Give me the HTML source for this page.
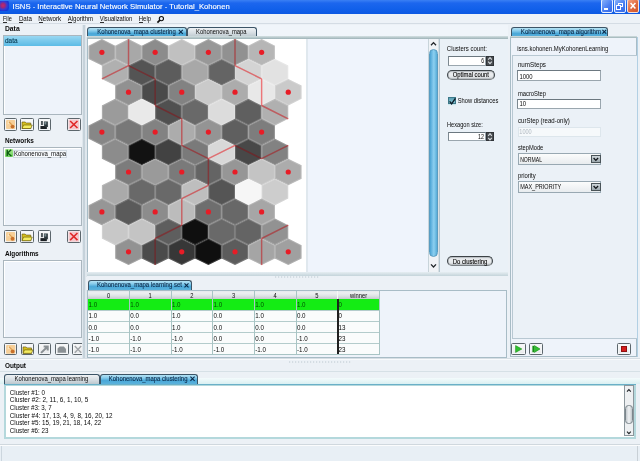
<!DOCTYPE html>
<html><head><meta charset="utf-8"><style>
*{margin:0;padding:0;box-sizing:border-box}
html,body{width:640px;height:461px;overflow:hidden;background:#ecf1f6;font-family:"Liberation Sans", sans-serif;font-size:6px;color:#0a0a0a}
.a{position:absolute}
.list{position:absolute;background:#eef3fa;border:1px solid #aab6be;box-shadow:inset 1px 1px 0 #fff}
.tbtn{position:absolute;border:1px solid #5c666c;border-radius:1.5px;background:linear-gradient(#fafafa,#e6e8ea);box-shadow:inset 0 0 0 1px #f4f6f8}
.tab{position:absolute;border:1px solid #3c5466;border-bottom:none;border-radius:3px 3px 0 0}
.tabsel{background:linear-gradient(#b4e2f4 0%,#8acdec 30%,#4aa8d8 62%,#5cb2dc 100%)}
.tabun{background:linear-gradient(#eef1f4 0%,#d8dfe4 50%,#bcc8ce 100%)}
.field{position:absolute;background:#fff;border:1px solid #9aa6ae;border-top-color:#6c7880;border-left-color:#7c8890}
.pill{position:absolute;border:1px solid #3c4246;border-bottom-color:#7a8084;border-radius:6px;background:linear-gradient(#d8dcdf 0%,#eceef0 40%,#e4e7e9 70%,#c8ccd0 100%);box-shadow:inset 0 0 0 0.8px #b4b9bd}
svg text{font-family:"Liberation Sans", sans-serif}
html{filter:blur(0.3px)}
</style></head><body>
<!-- title bar -->
<div class="a" style="left:0px;top:0px;width:640px;height:13.5px;background:linear-gradient(#3a80f4 0%,#1c66ee 22%,#1160ea 65%,#0c58e2 100%)"></div>
<div class="a" style="left:0px;top:1px;width:9px;height:10px;background:radial-gradient(circle at 3px 4.5px,#c02a70 0,#a02878 2px,#3a3ad0 4px,#1238d8 6px,transparent 8px)"></div>
<div class="a" style="left:601.2px;top:-1px;width:12px;height:13.6px;border:1px solid #e8f0ff;border-radius:2px;background:linear-gradient(135deg,#86b0fa,#4a7ef2 55%,#3468e6)"></div>
<div class="a" style="left:603.6px;top:8.2px;width:4.4px;height:1.6px;background:#fff"></div>
<div class="a" style="left:614.3px;top:-1px;width:11.6px;height:13.6px;border:1px solid #e8f0ff;border-radius:2px;background:linear-gradient(135deg,#86b0fa,#4a7ef2 55%,#3468e6)"></div>
<div class="a" style="left:618.3px;top:2.8px;width:5px;height:4.6px;border:1px solid #fff;border-top-width:1.6px"></div>
<div class="a" style="left:616.3px;top:5px;width:5px;height:4.6px;border:1px solid #fff;border-top-width:1.6px;background:#3a6ef0"></div>
<div class="a" style="left:627px;top:-1px;width:12px;height:13.6px;border:1px solid #f8e0d8;border-radius:2px;background:linear-gradient(135deg,#f4a080,#e06a40 55%,#d05428)"></div>
<svg class="a" style="left:627px;top:0" width="12" height="13"><path d="M3.6 3 L8.4 8.6 M8.4 3 L3.6 8.6" stroke="#fff" stroke-width="1.5"/></svg>
<!-- menu -->
<div class="a" style="left:0px;top:13.5px;width:640px;height:10.5px;background:#edf2f7;border-bottom:1px solid #d4dce4"></div>
<div class="a" style="left:3.0px;top:21.9px;width:3.6px;height:0.7px;background:#303030"></div><div class="a" style="left:19.0px;top:21.9px;width:4.4px;height:0.7px;background:#303030"></div><div class="a" style="left:38.5px;top:21.9px;width:4.8px;height:0.7px;background:#303030"></div><div class="a" style="left:67.8px;top:21.9px;width:4.4px;height:0.7px;background:#303030"></div><div class="a" style="left:99.7px;top:21.9px;width:4.2px;height:0.7px;background:#303030"></div><div class="a" style="left:138.8px;top:21.9px;width:4.5px;height:0.7px;background:#303030"></div>
<svg class="a" style="left:156px;top:14.5px" width="9" height="9"><circle cx="5.4" cy="3.6" r="2.1" stroke="#111" stroke-width="1.1" fill="none"/><path d="M3.9 5.1 L1.4 7.6" stroke="#111" stroke-width="1.7"/></svg>

<!-- left pane -->
<div class="list" style="left:3px;top:35px;width:78.5px;height:79.5px"></div>
<div class="a" style="left:4px;top:35.8px;width:76.5px;height:10.4px;background:linear-gradient(#9ad8f2 0%,#7ccaec 45%,#5cbce6 100%)"></div>
<div class="tbtn" style="left:3.5px;top:118px;width:13.2px;height:13px"></div><svg class="a" style="left:3.5px;top:118px" width="13.2" height="13" viewBox="0 0 13 13" preserveAspectRatio="none"><rect x="2" y="2" width="9" height="9" rx="1" fill="#f6cf98"/><path d="M4 2.5 L6 5.5 L3.5 6.5Z" fill="#fbe6c0"/><circle cx="8.4" cy="8.6" r="1.9" fill="#c8702a"/><path d="M5 4 L8 7" stroke="#e0a050" stroke-width="1.2"/></svg><div class="tbtn" style="left:20.4px;top:118px;width:13.3px;height:13px"></div><svg class="a" style="left:20.4px;top:118px" width="13.3" height="13" viewBox="0 0 13 13" preserveAspectRatio="none"><path d="M2 4 L5 4 L6 5 L10.5 5 L10.5 10.5 L2 10.5Z" fill="#d6c020" stroke="#605000" stroke-width="0.6"/><path d="M3.5 7 L12 7 L10.5 10.5 L2 10.5Z" fill="#f4ec60" stroke="#605000" stroke-width="0.6"/></svg><div class="tbtn" style="left:38px;top:118px;width:12.8px;height:13px"></div><svg class="a" style="left:38px;top:118px" width="12.8" height="13" viewBox="0 0 13 13" preserveAspectRatio="none"><rect x="2.5" y="8" width="6.5" height="3" fill="#1c2024"/><rect x="3" y="3" width="2" height="4" fill="#50585c"/><path d="M6 3.5 L10 3.5 L10 9 L7 9 L6 7Z" fill="#2a3438"/><rect x="6.5" y="4" width="2" height="2.5" fill="#7a8c90"/></svg><div class="tbtn" style="left:67.2px;top:118px;width:13.6px;height:13px"></div><svg class="a" style="left:67.2px;top:118px" width="13.6" height="13" viewBox="0 0 13 13" preserveAspectRatio="none"><rect x="1.5" y="1.5" width="10" height="10" fill="#f4c8cc"/><path d="M3 3 L10 10 M10 3 L3 10" stroke="#e02828" stroke-width="1.5"/></svg>
<div class="list" style="left:3px;top:147.3px;width:78.5px;height:79.2px"></div>
<div class="a" style="left:4.9px;top:149.3px;width:7.8px;height:7.5px;background:linear-gradient(#a8ea90,#6cd05a);border-radius:1px"></div>
<svg class="a" style="left:4.9px;top:149.3px" width="8" height="8"><path d="M2.2 0.8 L2.2 7 M6.2 0.8 L2.6 4 L6.4 7" stroke="#0c5a10" stroke-width="1.4" fill="none"/></svg>
<div class="a" style="left:13.1px;top:149.8px;width:54.2px;height:8px;border:1px solid #d2dae2;background:#f6f9fc"></div>
<div class="tbtn" style="left:3.5px;top:230px;width:13.2px;height:13.2px"></div><svg class="a" style="left:3.5px;top:230px" width="13.2" height="13.2" viewBox="0 0 13 13" preserveAspectRatio="none"><rect x="2" y="2" width="9" height="9" rx="1" fill="#f6cf98"/><path d="M4 2.5 L6 5.5 L3.5 6.5Z" fill="#fbe6c0"/><circle cx="8.4" cy="8.6" r="1.9" fill="#c8702a"/><path d="M5 4 L8 7" stroke="#e0a050" stroke-width="1.2"/></svg><div class="tbtn" style="left:20.4px;top:230px;width:13.3px;height:13.2px"></div><svg class="a" style="left:20.4px;top:230px" width="13.3" height="13.2" viewBox="0 0 13 13" preserveAspectRatio="none"><path d="M2 4 L5 4 L6 5 L10.5 5 L10.5 10.5 L2 10.5Z" fill="#d6c020" stroke="#605000" stroke-width="0.6"/><path d="M3.5 7 L12 7 L10.5 10.5 L2 10.5Z" fill="#f4ec60" stroke="#605000" stroke-width="0.6"/></svg><div class="tbtn" style="left:38px;top:230px;width:12.8px;height:13.2px"></div><svg class="a" style="left:38px;top:230px" width="12.8" height="13.2" viewBox="0 0 13 13" preserveAspectRatio="none"><rect x="2.5" y="8" width="6.5" height="3" fill="#1c2024"/><rect x="3" y="3" width="2" height="4" fill="#50585c"/><path d="M6 3.5 L10 3.5 L10 9 L7 9 L6 7Z" fill="#2a3438"/><rect x="6.5" y="4" width="2" height="2.5" fill="#7a8c90"/></svg><div class="tbtn" style="left:67.2px;top:230px;width:13.6px;height:13.2px"></div><svg class="a" style="left:67.2px;top:230px" width="13.6" height="13.2" viewBox="0 0 13 13" preserveAspectRatio="none"><rect x="1.5" y="1.5" width="10" height="10" fill="#f4c8cc"/><path d="M3 3 L10 10 M10 3 L3 10" stroke="#e02828" stroke-width="1.5"/></svg>
<div class="list" style="left:3px;top:259.8px;width:78.5px;height:78.5px"></div>
<div class="tbtn" style="left:3.5px;top:342.5px;width:13.4px;height:12.8px"></div><svg class="a" style="left:3.5px;top:342.5px" width="13.4" height="12.8" viewBox="0 0 13 13" preserveAspectRatio="none"><rect x="2" y="2" width="9" height="9" rx="1" fill="#f6cf98"/><path d="M4 2.5 L6 5.5 L3.5 6.5Z" fill="#fbe6c0"/><circle cx="8.4" cy="8.6" r="1.9" fill="#c8702a"/><path d="M5 4 L8 7" stroke="#e0a050" stroke-width="1.2"/></svg><div class="tbtn" style="left:20.8px;top:342.5px;width:13px;height:12.8px"></div><svg class="a" style="left:20.8px;top:342.5px" width="13" height="12.8" viewBox="0 0 13 13" preserveAspectRatio="none"><path d="M2 4 L5 4 L6 5 L10.5 5 L10.5 10.5 L2 10.5Z" fill="#d6c020" stroke="#605000" stroke-width="0.6"/><path d="M3.5 7 L12 7 L10.5 10.5 L2 10.5Z" fill="#f4ec60" stroke="#605000" stroke-width="0.6"/></svg><div class="tbtn" style="left:38px;top:342.5px;width:13.3px;height:12.8px"></div><svg class="a" style="left:38px;top:342.5px" width="13.3" height="12.8" viewBox="0 0 13 13" preserveAspectRatio="none"><path d="M3 10 L9 4 M5.5 3.5 L9.5 3.5 L9.5 7.5" stroke="#8a9094" stroke-width="2" fill="none"/></svg><div class="tbtn" style="left:55.3px;top:342.5px;width:13.6px;height:12.8px"></div><svg class="a" style="left:55.3px;top:342.5px" width="13.6" height="12.8" viewBox="0 0 13 13" preserveAspectRatio="none"><path d="M2.5 10 L2.5 5.5 L4.5 3.5 L8.5 3.5 L10.5 6 L10.5 10Z" fill="#8a9094"/></svg><div class="tbtn" style="left:72.4px;top:342.5px;width:12px;height:12.8px"></div><svg class="a" style="left:72.4px;top:342.5px" width="12" height="12.8" viewBox="0 0 13 13" preserveAspectRatio="none"><path d="M3 3 L10 10 M10 3 L3 10" stroke="#a0a4a8" stroke-width="1.5"/></svg>
<div class="a" style="left:81.6px;top:24.5px;width:5px;height:334px;background:#dfe7ed"></div>
<div class="a" style="left:83.4px;top:24.5px;width:1.6px;height:334px;background:#c6d2da"></div>

<!-- central pane -->
<div class="a" style="left:86.6px;top:37px;width:421.6px;height:238.6px;border:1px solid #a8bcc6;background:#eef3fa"></div>
<div class="a" style="left:86px;top:24.6px;width:422px;height:12.4px;background:#f0f5fa"></div>
<div class="tab tabsel" style="left:87.4px;top:27.3px;width:99.7px;height:9.4px"></div>
<div class="tab tabun" style="left:187.1px;top:27.3px;width:70.3px;height:9.4px"></div>
<div class="a" style="left:87px;top:36.2px;width:421px;height:2.6px;background:linear-gradient(#d4e0e2,#9cb2b6)"></div>
<div class="a" style="left:88px;top:38.8px;width:218.3px;height:233.6px;background:#fff"></div>
<svg class="a" style="left:0;top:0" width="640" height="461">
<clipPath id="mc"><rect x="88" y="38.8" width="218.3" height="233.6"/></clipPath>
<g clip-path="url(#mc)">
<path d="M101.90,39.00L115.21,45.65L115.21,58.95L101.90,65.60L88.59,58.95L88.59,45.65Z" fill="#a0a0a0"/>
<path d="M101.90,39.70L114.61,46.00L114.61,58.60L101.90,64.90L89.19,58.60L89.19,46.00Z" fill="none" stroke="#ffffff" stroke-opacity="0.22" stroke-width="0.8"/>
<path d="M128.52,39.00L141.83,45.65L141.83,58.95L128.52,65.60L115.21,58.95L115.21,45.65Z" fill="#a8a8a8"/>
<path d="M128.52,39.70L141.23,46.00L141.23,58.60L128.52,64.90L115.81,58.60L115.81,46.00Z" fill="none" stroke="#ffffff" stroke-opacity="0.22" stroke-width="0.8"/>
<path d="M155.14,39.00L168.45,45.65L168.45,58.95L155.14,65.60L141.83,58.95L141.83,45.65Z" fill="#8c8c8c"/>
<path d="M155.14,39.70L167.85,46.00L167.85,58.60L155.14,64.90L142.43,58.60L142.43,46.00Z" fill="none" stroke="#ffffff" stroke-opacity="0.22" stroke-width="0.8"/>
<path d="M181.76,39.00L195.07,45.65L195.07,58.95L181.76,65.60L168.45,58.95L168.45,45.65Z" fill="#c0c0c0"/>
<path d="M181.76,39.70L194.47,46.00L194.47,58.60L181.76,64.90L169.05,58.60L169.05,46.00Z" fill="none" stroke="#ffffff" stroke-opacity="0.22" stroke-width="0.8"/>
<path d="M208.38,39.00L221.69,45.65L221.69,58.95L208.38,65.60L195.07,58.95L195.07,45.65Z" fill="#989898"/>
<path d="M208.38,39.70L221.09,46.00L221.09,58.60L208.38,64.90L195.67,58.60L195.67,46.00Z" fill="none" stroke="#ffffff" stroke-opacity="0.22" stroke-width="0.8"/>
<path d="M235.00,39.00L248.31,45.65L248.31,58.95L235.00,65.60L221.69,58.95L221.69,45.65Z" fill="#919191"/>
<path d="M235.00,39.70L247.71,46.00L247.71,58.60L235.00,64.90L222.29,58.60L222.29,46.00Z" fill="none" stroke="#ffffff" stroke-opacity="0.22" stroke-width="0.8"/>
<path d="M261.62,39.00L274.93,45.65L274.93,58.95L261.62,65.60L248.31,58.95L248.31,45.65Z" fill="#b6b6b6"/>
<path d="M261.62,39.70L274.33,46.00L274.33,58.60L261.62,64.90L248.91,58.60L248.91,46.00Z" fill="none" stroke="#ffffff" stroke-opacity="0.22" stroke-width="0.8"/>
<path d="M115.21,58.95L128.52,65.60L128.52,78.90L115.21,85.55L101.90,78.90L101.90,65.60Z" fill="#b0b0b0"/>
<path d="M115.21,59.65L127.92,65.95L127.92,78.55L115.21,84.85L102.50,78.55L102.50,65.95Z" fill="none" stroke="#ffffff" stroke-opacity="0.22" stroke-width="0.8"/>
<path d="M141.83,58.95L155.14,65.60L155.14,78.90L141.83,85.55L128.52,78.90L128.52,65.60Z" fill="#545454"/>
<path d="M141.83,59.65L154.54,65.95L154.54,78.55L141.83,84.85L129.12,78.55L129.12,65.95Z" fill="none" stroke="#ffffff" stroke-opacity="0.22" stroke-width="0.8"/>
<path d="M168.45,58.95L181.76,65.60L181.76,78.90L168.45,85.55L155.14,78.90L155.14,65.60Z" fill="#5c5c5c"/>
<path d="M168.45,59.65L181.16,65.95L181.16,78.55L168.45,84.85L155.74,78.55L155.74,65.95Z" fill="none" stroke="#ffffff" stroke-opacity="0.22" stroke-width="0.8"/>
<path d="M195.07,58.95L208.38,65.60L208.38,78.90L195.07,85.55L181.76,78.90L181.76,65.60Z" fill="#a8a8a8"/>
<path d="M195.07,59.65L207.78,65.95L207.78,78.55L195.07,84.85L182.36,78.55L182.36,65.95Z" fill="none" stroke="#ffffff" stroke-opacity="0.22" stroke-width="0.8"/>
<path d="M221.69,58.95L235.00,65.60L235.00,78.90L221.69,85.55L208.38,78.90L208.38,65.60Z" fill="#646464"/>
<path d="M221.69,59.65L234.40,65.95L234.40,78.55L221.69,84.85L208.98,78.55L208.98,65.95Z" fill="none" stroke="#ffffff" stroke-opacity="0.22" stroke-width="0.8"/>
<path d="M248.31,58.95L261.62,65.60L261.62,78.90L248.31,85.55L235.00,78.90L235.00,65.60Z" fill="#d4d4d4"/>
<path d="M248.31,59.65L261.02,65.95L261.02,78.55L248.31,84.85L235.60,78.55L235.60,65.95Z" fill="none" stroke="#ffffff" stroke-opacity="0.22" stroke-width="0.8"/>
<path d="M274.93,58.95L288.24,65.60L288.24,78.90L274.93,85.55L261.62,78.90L261.62,65.60Z" fill="#e2e2e2"/>
<path d="M274.93,59.65L287.64,65.95L287.64,78.55L274.93,84.85L262.22,78.55L262.22,65.95Z" fill="none" stroke="#ffffff" stroke-opacity="0.22" stroke-width="0.8"/>
<path d="M128.52,78.90L141.83,85.55L141.83,98.85L128.52,105.50L115.21,98.85L115.21,85.55Z" fill="#919191"/>
<path d="M128.52,79.60L141.23,85.90L141.23,98.50L128.52,104.80L115.81,98.50L115.81,85.90Z" fill="none" stroke="#ffffff" stroke-opacity="0.22" stroke-width="0.8"/>
<path d="M155.14,78.90L168.45,85.55L168.45,98.85L155.14,105.50L141.83,98.85L141.83,85.55Z" fill="#4a4a4a"/>
<path d="M155.14,79.60L167.85,85.90L167.85,98.50L155.14,104.80L142.43,98.50L142.43,85.90Z" fill="none" stroke="#ffffff" stroke-opacity="0.22" stroke-width="0.8"/>
<path d="M181.76,78.90L195.07,85.55L195.07,98.85L181.76,105.50L168.45,98.85L168.45,85.55Z" fill="#828282"/>
<path d="M181.76,79.60L194.47,85.90L194.47,98.50L181.76,104.80L169.05,98.50L169.05,85.90Z" fill="none" stroke="#ffffff" stroke-opacity="0.22" stroke-width="0.8"/>
<path d="M208.38,78.90L221.69,85.55L221.69,98.85L208.38,105.50L195.07,98.85L195.07,85.55Z" fill="#cacaca"/>
<path d="M208.38,79.60L221.09,85.90L221.09,98.50L208.38,104.80L195.67,98.50L195.67,85.90Z" fill="none" stroke="#ffffff" stroke-opacity="0.22" stroke-width="0.8"/>
<path d="M235.00,78.90L248.31,85.55L248.31,98.85L235.00,105.50L221.69,98.85L221.69,85.55Z" fill="#acacac"/>
<path d="M235.00,79.60L247.71,85.90L247.71,98.50L235.00,104.80L222.29,98.50L222.29,85.90Z" fill="none" stroke="#ffffff" stroke-opacity="0.22" stroke-width="0.8"/>
<path d="M261.62,78.90L274.93,85.55L274.93,98.85L261.62,105.50L248.31,98.85L248.31,85.55Z" fill="#e8e8e8"/>
<path d="M261.62,79.60L274.33,85.90L274.33,98.50L261.62,104.80L248.91,98.50L248.91,85.90Z" fill="none" stroke="#ffffff" stroke-opacity="0.22" stroke-width="0.8"/>
<path d="M288.24,78.90L301.55,85.55L301.55,98.85L288.24,105.50L274.93,98.85L274.93,85.55Z" fill="#cacaca"/>
<path d="M288.24,79.60L300.95,85.90L300.95,98.50L288.24,104.80L275.53,98.50L275.53,85.90Z" fill="none" stroke="#ffffff" stroke-opacity="0.22" stroke-width="0.8"/>
<path d="M115.21,98.85L128.52,105.50L128.52,118.80L115.21,125.45L101.90,118.80L101.90,105.50Z" fill="#9b9b9b"/>
<path d="M115.21,99.55L127.92,105.85L127.92,118.45L115.21,124.75L102.50,118.45L102.50,105.85Z" fill="none" stroke="#ffffff" stroke-opacity="0.22" stroke-width="0.8"/>
<path d="M141.83,98.85L155.14,105.50L155.14,118.80L141.83,125.45L128.52,118.80L128.52,105.50Z" fill="#e9e9e9"/>
<path d="M141.83,99.55L154.54,105.85L154.54,118.45L141.83,124.75L129.12,118.45L129.12,105.85Z" fill="none" stroke="#ffffff" stroke-opacity="0.22" stroke-width="0.8"/>
<path d="M168.45,98.85L181.76,105.50L181.76,118.80L168.45,125.45L155.14,118.80L155.14,105.50Z" fill="#505050"/>
<path d="M168.45,99.55L181.16,105.85L181.16,118.45L168.45,124.75L155.74,118.45L155.74,105.85Z" fill="none" stroke="#ffffff" stroke-opacity="0.22" stroke-width="0.8"/>
<path d="M195.07,98.85L208.38,105.50L208.38,118.80L195.07,125.45L181.76,118.80L181.76,105.50Z" fill="#696969"/>
<path d="M195.07,99.55L207.78,105.85L207.78,118.45L195.07,124.75L182.36,118.45L182.36,105.85Z" fill="none" stroke="#ffffff" stroke-opacity="0.22" stroke-width="0.8"/>
<path d="M221.69,98.85L235.00,105.50L235.00,118.80L221.69,125.45L208.38,118.80L208.38,105.50Z" fill="#dcdcdc"/>
<path d="M221.69,99.55L234.40,105.85L234.40,118.45L221.69,124.75L208.98,118.45L208.98,105.85Z" fill="none" stroke="#ffffff" stroke-opacity="0.22" stroke-width="0.8"/>
<path d="M248.31,98.85L261.62,105.50L261.62,118.80L248.31,125.45L235.00,118.80L235.00,105.50Z" fill="#5f5f5f"/>
<path d="M248.31,99.55L261.02,105.85L261.02,118.45L248.31,124.75L235.60,118.45L235.60,105.85Z" fill="none" stroke="#ffffff" stroke-opacity="0.22" stroke-width="0.8"/>
<path d="M274.93,98.85L288.24,105.50L288.24,118.80L274.93,125.45L261.62,118.80L261.62,105.50Z" fill="#b0b0b0"/>
<path d="M274.93,99.55L287.64,105.85L287.64,118.45L274.93,124.75L262.22,118.45L262.22,105.85Z" fill="none" stroke="#ffffff" stroke-opacity="0.22" stroke-width="0.8"/>
<path d="M101.90,118.80L115.21,125.45L115.21,138.75L101.90,145.40L88.59,138.75L88.59,125.45Z" fill="#878787"/>
<path d="M101.90,119.50L114.61,125.80L114.61,138.40L101.90,144.70L89.19,138.40L89.19,125.80Z" fill="none" stroke="#ffffff" stroke-opacity="0.22" stroke-width="0.8"/>
<path d="M128.52,118.80L141.83,125.45L141.83,138.75L128.52,145.40L115.21,138.75L115.21,125.45Z" fill="#787878"/>
<path d="M128.52,119.50L141.23,125.80L141.23,138.40L128.52,144.70L115.81,138.40L115.81,125.80Z" fill="none" stroke="#ffffff" stroke-opacity="0.22" stroke-width="0.8"/>
<path d="M155.14,118.80L168.45,125.45L168.45,138.75L155.14,145.40L141.83,138.75L141.83,125.45Z" fill="#828282"/>
<path d="M155.14,119.50L167.85,125.80L167.85,138.40L155.14,144.70L142.43,138.40L142.43,125.80Z" fill="none" stroke="#ffffff" stroke-opacity="0.22" stroke-width="0.8"/>
<path d="M181.76,118.80L195.07,125.45L195.07,138.75L181.76,145.40L168.45,138.75L168.45,125.45Z" fill="#acacac"/>
<path d="M181.76,119.50L194.47,125.80L194.47,138.40L181.76,144.70L169.05,138.40L169.05,125.80Z" fill="none" stroke="#ffffff" stroke-opacity="0.22" stroke-width="0.8"/>
<path d="M208.38,118.80L221.69,125.45L221.69,138.75L208.38,145.40L195.07,138.75L195.07,125.45Z" fill="#949494"/>
<path d="M208.38,119.50L221.09,125.80L221.09,138.40L208.38,144.70L195.67,138.40L195.67,125.80Z" fill="none" stroke="#ffffff" stroke-opacity="0.22" stroke-width="0.8"/>
<path d="M235.00,118.80L248.31,125.45L248.31,138.75L235.00,145.40L221.69,138.75L221.69,125.45Z" fill="#5f5f5f"/>
<path d="M235.00,119.50L247.71,125.80L247.71,138.40L235.00,144.70L222.29,138.40L222.29,125.80Z" fill="none" stroke="#ffffff" stroke-opacity="0.22" stroke-width="0.8"/>
<path d="M261.62,118.80L274.93,125.45L274.93,138.75L261.62,145.40L248.31,138.75L248.31,125.45Z" fill="#7d7d7d"/>
<path d="M261.62,119.50L274.33,125.80L274.33,138.40L261.62,144.70L248.91,138.40L248.91,125.80Z" fill="none" stroke="#ffffff" stroke-opacity="0.22" stroke-width="0.8"/>
<path d="M115.21,138.75L128.52,145.40L128.52,158.70L115.21,165.35L101.90,158.70L101.90,145.40Z" fill="#8c8c8c"/>
<path d="M115.21,139.45L127.92,145.75L127.92,158.35L115.21,164.65L102.50,158.35L102.50,145.75Z" fill="none" stroke="#ffffff" stroke-opacity="0.22" stroke-width="0.8"/>
<path d="M141.83,138.75L155.14,145.40L155.14,158.70L141.83,165.35L128.52,158.70L128.52,145.40Z" fill="#121212"/>
<path d="M141.83,139.45L154.54,145.75L154.54,158.35L141.83,164.65L129.12,158.35L129.12,145.75Z" fill="none" stroke="#ffffff" stroke-opacity="0.22" stroke-width="0.8"/>
<path d="M168.45,138.75L181.76,145.40L181.76,158.70L168.45,165.35L155.14,158.70L155.14,145.40Z" fill="#424242"/>
<path d="M168.45,139.45L181.16,145.75L181.16,158.35L168.45,164.65L155.74,158.35L155.74,145.75Z" fill="none" stroke="#ffffff" stroke-opacity="0.22" stroke-width="0.8"/>
<path d="M195.07,138.75L208.38,145.40L208.38,158.70L195.07,165.35L181.76,158.70L181.76,145.40Z" fill="#7a7a7a"/>
<path d="M195.07,139.45L207.78,145.75L207.78,158.35L195.07,164.65L182.36,158.35L182.36,145.75Z" fill="none" stroke="#ffffff" stroke-opacity="0.22" stroke-width="0.8"/>
<path d="M221.69,138.75L235.00,145.40L235.00,158.70L221.69,165.35L208.38,158.70L208.38,145.40Z" fill="#d8d8d8"/>
<path d="M221.69,139.45L234.40,145.75L234.40,158.35L221.69,164.65L208.98,158.35L208.98,145.75Z" fill="none" stroke="#ffffff" stroke-opacity="0.22" stroke-width="0.8"/>
<path d="M248.31,138.75L261.62,145.40L261.62,158.70L248.31,165.35L235.00,158.70L235.00,145.40Z" fill="#484848"/>
<path d="M248.31,139.45L261.02,145.75L261.02,158.35L248.31,164.65L235.60,158.35L235.60,145.75Z" fill="none" stroke="#ffffff" stroke-opacity="0.22" stroke-width="0.8"/>
<path d="M274.93,138.75L288.24,145.40L288.24,158.70L274.93,165.35L261.62,158.70L261.62,145.40Z" fill="#828282"/>
<path d="M274.93,139.45L287.64,145.75L287.64,158.35L274.93,164.65L262.22,158.35L262.22,145.75Z" fill="none" stroke="#ffffff" stroke-opacity="0.22" stroke-width="0.8"/>
<path d="M128.52,158.70L141.83,165.35L141.83,178.65L128.52,185.30L115.21,178.65L115.21,165.35Z" fill="#7c7c7c"/>
<path d="M128.52,159.40L141.23,165.70L141.23,178.30L128.52,184.60L115.81,178.30L115.81,165.70Z" fill="none" stroke="#ffffff" stroke-opacity="0.22" stroke-width="0.8"/>
<path d="M155.14,158.70L168.45,165.35L168.45,178.65L155.14,185.30L141.83,178.65L141.83,165.35Z" fill="#9a9a9a"/>
<path d="M155.14,159.40L167.85,165.70L167.85,178.30L155.14,184.60L142.43,178.30L142.43,165.70Z" fill="none" stroke="#ffffff" stroke-opacity="0.22" stroke-width="0.8"/>
<path d="M181.76,158.70L195.07,165.35L195.07,178.65L181.76,185.30L168.45,178.65L168.45,165.35Z" fill="#7a7a7a"/>
<path d="M181.76,159.40L194.47,165.70L194.47,178.30L181.76,184.60L169.05,178.30L169.05,165.70Z" fill="none" stroke="#ffffff" stroke-opacity="0.22" stroke-width="0.8"/>
<path d="M208.38,158.70L221.69,165.35L221.69,178.65L208.38,185.30L195.07,178.65L195.07,165.35Z" fill="#646464"/>
<path d="M208.38,159.40L221.09,165.70L221.09,178.30L208.38,184.60L195.67,178.30L195.67,165.70Z" fill="none" stroke="#ffffff" stroke-opacity="0.22" stroke-width="0.8"/>
<path d="M235.00,158.70L248.31,165.35L248.31,178.65L235.00,185.30L221.69,178.65L221.69,165.35Z" fill="#969696"/>
<path d="M235.00,159.40L247.71,165.70L247.71,178.30L235.00,184.60L222.29,178.30L222.29,165.70Z" fill="none" stroke="#ffffff" stroke-opacity="0.22" stroke-width="0.8"/>
<path d="M261.62,158.70L274.93,165.35L274.93,178.65L261.62,185.30L248.31,178.65L248.31,165.35Z" fill="#c4c4c4"/>
<path d="M261.62,159.40L274.33,165.70L274.33,178.30L261.62,184.60L248.91,178.30L248.91,165.70Z" fill="none" stroke="#ffffff" stroke-opacity="0.22" stroke-width="0.8"/>
<path d="M288.24,158.70L301.55,165.35L301.55,178.65L288.24,185.30L274.93,178.65L274.93,165.35Z" fill="#acacac"/>
<path d="M288.24,159.40L300.95,165.70L300.95,178.30L288.24,184.60L275.53,178.30L275.53,165.70Z" fill="none" stroke="#ffffff" stroke-opacity="0.22" stroke-width="0.8"/>
<path d="M115.21,178.65L128.52,185.30L128.52,198.60L115.21,205.25L101.90,198.60L101.90,185.30Z" fill="#aaaaaa"/>
<path d="M115.21,179.35L127.92,185.65L127.92,198.25L115.21,204.55L102.50,198.25L102.50,185.65Z" fill="none" stroke="#ffffff" stroke-opacity="0.22" stroke-width="0.8"/>
<path d="M141.83,178.65L155.14,185.30L155.14,198.60L141.83,205.25L128.52,198.60L128.52,185.30Z" fill="#696969"/>
<path d="M141.83,179.35L154.54,185.65L154.54,198.25L141.83,204.55L129.12,198.25L129.12,185.65Z" fill="none" stroke="#ffffff" stroke-opacity="0.22" stroke-width="0.8"/>
<path d="M168.45,178.65L181.76,185.30L181.76,198.60L168.45,205.25L155.14,198.60L155.14,185.30Z" fill="#696969"/>
<path d="M168.45,179.35L181.16,185.65L181.16,198.25L168.45,204.55L155.74,198.25L155.74,185.65Z" fill="none" stroke="#ffffff" stroke-opacity="0.22" stroke-width="0.8"/>
<path d="M195.07,178.65L208.38,185.30L208.38,198.60L195.07,205.25L181.76,198.60L181.76,185.30Z" fill="#bebebe"/>
<path d="M195.07,179.35L207.78,185.65L207.78,198.25L195.07,204.55L182.36,198.25L182.36,185.65Z" fill="none" stroke="#ffffff" stroke-opacity="0.22" stroke-width="0.8"/>
<path d="M221.69,178.65L235.00,185.30L235.00,198.60L221.69,205.25L208.38,198.60L208.38,185.30Z" fill="#555555"/>
<path d="M221.69,179.35L234.40,185.65L234.40,198.25L221.69,204.55L208.98,198.25L208.98,185.65Z" fill="none" stroke="#ffffff" stroke-opacity="0.22" stroke-width="0.8"/>
<path d="M248.31,178.65L261.62,185.30L261.62,198.60L248.31,205.25L235.00,198.60L235.00,185.30Z" fill="#f6f6f6"/>
<path d="M248.31,179.35L261.02,185.65L261.02,198.25L248.31,204.55L235.60,198.25L235.60,185.65Z" fill="none" stroke="#ffffff" stroke-opacity="0.22" stroke-width="0.8"/>
<path d="M274.93,178.65L288.24,185.30L288.24,198.60L274.93,205.25L261.62,198.60L261.62,185.30Z" fill="#cdcdcd"/>
<path d="M274.93,179.35L287.64,185.65L287.64,198.25L274.93,204.55L262.22,198.25L262.22,185.65Z" fill="none" stroke="#ffffff" stroke-opacity="0.22" stroke-width="0.8"/>
<path d="M101.90,198.60L115.21,205.25L115.21,218.55L101.90,225.20L88.59,218.55L88.59,205.25Z" fill="#969696"/>
<path d="M101.90,199.30L114.61,205.60L114.61,218.20L101.90,224.50L89.19,218.20L89.19,205.60Z" fill="none" stroke="#ffffff" stroke-opacity="0.22" stroke-width="0.8"/>
<path d="M128.52,198.60L141.83,205.25L141.83,218.55L128.52,225.20L115.21,218.55L115.21,205.25Z" fill="#5a5a5a"/>
<path d="M128.52,199.30L141.23,205.60L141.23,218.20L128.52,224.50L115.81,218.20L115.81,205.60Z" fill="none" stroke="#ffffff" stroke-opacity="0.22" stroke-width="0.8"/>
<path d="M155.14,198.60L168.45,205.25L168.45,218.55L155.14,225.20L141.83,218.55L141.83,205.25Z" fill="#8c8c8c"/>
<path d="M155.14,199.30L167.85,205.60L167.85,218.20L155.14,224.50L142.43,218.20L142.43,205.60Z" fill="none" stroke="#ffffff" stroke-opacity="0.22" stroke-width="0.8"/>
<path d="M181.76,198.60L195.07,205.25L195.07,218.55L181.76,225.20L168.45,218.55L168.45,205.25Z" fill="#bcbcbc"/>
<path d="M181.76,199.30L194.47,205.60L194.47,218.20L181.76,224.50L169.05,218.20L169.05,205.60Z" fill="none" stroke="#ffffff" stroke-opacity="0.22" stroke-width="0.8"/>
<path d="M208.38,198.60L221.69,205.25L221.69,218.55L208.38,225.20L195.07,218.55L195.07,205.25Z" fill="#6e6e6e"/>
<path d="M208.38,199.30L221.09,205.60L221.09,218.20L208.38,224.50L195.67,218.20L195.67,205.60Z" fill="none" stroke="#ffffff" stroke-opacity="0.22" stroke-width="0.8"/>
<path d="M235.00,198.60L248.31,205.25L248.31,218.55L235.00,225.20L221.69,218.55L221.69,205.25Z" fill="#686868"/>
<path d="M235.00,199.30L247.71,205.60L247.71,218.20L235.00,224.50L222.29,218.20L222.29,205.60Z" fill="none" stroke="#ffffff" stroke-opacity="0.22" stroke-width="0.8"/>
<path d="M261.62,198.60L274.93,205.25L274.93,218.55L261.62,225.20L248.31,218.55L248.31,205.25Z" fill="#a6a6a6"/>
<path d="M261.62,199.30L274.33,205.60L274.33,218.20L261.62,224.50L248.91,218.20L248.91,205.60Z" fill="none" stroke="#ffffff" stroke-opacity="0.22" stroke-width="0.8"/>
<path d="M115.21,218.55L128.52,225.20L128.52,238.50L115.21,245.15L101.90,238.50L101.90,225.20Z" fill="#c8c8c8"/>
<path d="M115.21,219.25L127.92,225.55L127.92,238.15L115.21,244.45L102.50,238.15L102.50,225.55Z" fill="none" stroke="#ffffff" stroke-opacity="0.22" stroke-width="0.8"/>
<path d="M141.83,218.55L155.14,225.20L155.14,238.50L141.83,245.15L128.52,238.50L128.52,225.20Z" fill="#c4c4c4"/>
<path d="M141.83,219.25L154.54,225.55L154.54,238.15L141.83,244.45L129.12,238.15L129.12,225.55Z" fill="none" stroke="#ffffff" stroke-opacity="0.22" stroke-width="0.8"/>
<path d="M168.45,218.55L181.76,225.20L181.76,238.50L168.45,245.15L155.14,238.50L155.14,225.20Z" fill="#5e5e5e"/>
<path d="M168.45,219.25L181.16,225.55L181.16,238.15L168.45,244.45L155.74,238.15L155.74,225.55Z" fill="none" stroke="#ffffff" stroke-opacity="0.22" stroke-width="0.8"/>
<path d="M195.07,218.55L208.38,225.20L208.38,238.50L195.07,245.15L181.76,238.50L181.76,225.20Z" fill="#0f0f0f"/>
<path d="M195.07,219.25L207.78,225.55L207.78,238.15L195.07,244.45L182.36,238.15L182.36,225.55Z" fill="none" stroke="#ffffff" stroke-opacity="0.22" stroke-width="0.8"/>
<path d="M221.69,218.55L235.00,225.20L235.00,238.50L221.69,245.15L208.38,238.50L208.38,225.20Z" fill="#696969"/>
<path d="M221.69,219.25L234.40,225.55L234.40,238.15L221.69,244.45L208.98,238.15L208.98,225.55Z" fill="none" stroke="#ffffff" stroke-opacity="0.22" stroke-width="0.8"/>
<path d="M248.31,218.55L261.62,225.20L261.62,238.50L248.31,245.15L235.00,238.50L235.00,225.20Z" fill="#646464"/>
<path d="M248.31,219.25L261.02,225.55L261.02,238.15L248.31,244.45L235.60,238.15L235.60,225.55Z" fill="none" stroke="#ffffff" stroke-opacity="0.22" stroke-width="0.8"/>
<path d="M274.93,218.55L288.24,225.20L288.24,238.50L274.93,245.15L261.62,238.50L261.62,225.20Z" fill="#929292"/>
<path d="M274.93,219.25L287.64,225.55L287.64,238.15L274.93,244.45L262.22,238.15L262.22,225.55Z" fill="none" stroke="#ffffff" stroke-opacity="0.22" stroke-width="0.8"/>
<path d="M128.52,238.50L141.83,245.15L141.83,258.45L128.52,265.10L115.21,258.45L115.21,245.15Z" fill="#929292"/>
<path d="M128.52,239.20L141.23,245.50L141.23,258.10L128.52,264.40L115.81,258.10L115.81,245.50Z" fill="none" stroke="#ffffff" stroke-opacity="0.22" stroke-width="0.8"/>
<path d="M155.14,238.50L168.45,245.15L168.45,258.45L155.14,265.10L141.83,258.45L141.83,245.15Z" fill="#4b4b4b"/>
<path d="M155.14,239.20L167.85,245.50L167.85,258.10L155.14,264.40L142.43,258.10L142.43,245.50Z" fill="none" stroke="#ffffff" stroke-opacity="0.22" stroke-width="0.8"/>
<path d="M181.76,238.50L195.07,245.15L195.07,258.45L181.76,265.10L168.45,258.45L168.45,245.15Z" fill="#373737"/>
<path d="M181.76,239.20L194.47,245.50L194.47,258.10L181.76,264.40L169.05,258.10L169.05,245.50Z" fill="none" stroke="#ffffff" stroke-opacity="0.22" stroke-width="0.8"/>
<path d="M208.38,238.50L221.69,245.15L221.69,258.45L208.38,265.10L195.07,258.45L195.07,245.15Z" fill="#0f0f0f"/>
<path d="M208.38,239.20L221.09,245.50L221.09,258.10L208.38,264.40L195.67,258.10L195.67,245.50Z" fill="none" stroke="#ffffff" stroke-opacity="0.22" stroke-width="0.8"/>
<path d="M235.00,238.50L248.31,245.15L248.31,258.45L235.00,265.10L221.69,258.45L221.69,245.15Z" fill="#5c5c5c"/>
<path d="M235.00,239.20L247.71,245.50L247.71,258.10L235.00,264.40L222.29,258.10L222.29,245.50Z" fill="none" stroke="#ffffff" stroke-opacity="0.22" stroke-width="0.8"/>
<path d="M261.62,238.50L274.93,245.15L274.93,258.45L261.62,265.10L248.31,258.45L248.31,245.15Z" fill="#a5a5a5"/>
<path d="M261.62,239.20L274.33,245.50L274.33,258.10L261.62,264.40L248.91,258.10L248.91,245.50Z" fill="none" stroke="#ffffff" stroke-opacity="0.22" stroke-width="0.8"/>
<path d="M288.24,238.50L301.55,245.15L301.55,258.45L288.24,265.10L274.93,258.45L274.93,245.15Z" fill="#a0a0a0"/>
<path d="M288.24,239.20L300.95,245.50L300.95,258.10L288.24,264.40L275.53,258.10L275.53,245.50Z" fill="none" stroke="#ffffff" stroke-opacity="0.22" stroke-width="0.8"/>
<line x1="128.52" y1="39.00" x2="128.52" y2="65.60" stroke="#ff1010" stroke-width="1.4" stroke-opacity="0.45" style="mix-blend-mode:multiply"/>
<line x1="128.52" y1="39.00" x2="128.52" y2="65.60" stroke="#ff3040" stroke-width="1.4" stroke-opacity="0.18"/>
<line x1="128.52" y1="65.60" x2="101.90" y2="78.90" stroke="#ff1010" stroke-width="1.4" stroke-opacity="0.45" style="mix-blend-mode:multiply"/>
<line x1="128.52" y1="65.60" x2="101.90" y2="78.90" stroke="#ff3040" stroke-width="1.4" stroke-opacity="0.18"/>
<line x1="155.14" y1="78.90" x2="128.52" y2="65.60" stroke="#ff1010" stroke-width="1.4" stroke-opacity="0.45" style="mix-blend-mode:multiply"/>
<line x1="155.14" y1="78.90" x2="128.52" y2="65.60" stroke="#ff3040" stroke-width="1.4" stroke-opacity="0.18"/>
<line x1="235.00" y1="39.00" x2="235.00" y2="65.60" stroke="#ff1010" stroke-width="1.4" stroke-opacity="0.45" style="mix-blend-mode:multiply"/>
<line x1="235.00" y1="39.00" x2="235.00" y2="65.60" stroke="#ff3040" stroke-width="1.4" stroke-opacity="0.18"/>
<line x1="261.62" y1="78.90" x2="235.00" y2="65.60" stroke="#ff1010" stroke-width="1.4" stroke-opacity="0.45" style="mix-blend-mode:multiply"/>
<line x1="261.62" y1="78.90" x2="235.00" y2="65.60" stroke="#ff3040" stroke-width="1.4" stroke-opacity="0.18"/>
<line x1="155.14" y1="78.90" x2="155.14" y2="105.50" stroke="#ff1010" stroke-width="1.4" stroke-opacity="0.45" style="mix-blend-mode:multiply"/>
<line x1="155.14" y1="78.90" x2="155.14" y2="105.50" stroke="#ff3040" stroke-width="1.4" stroke-opacity="0.18"/>
<line x1="181.76" y1="118.80" x2="155.14" y2="105.50" stroke="#ff1010" stroke-width="1.4" stroke-opacity="0.45" style="mix-blend-mode:multiply"/>
<line x1="181.76" y1="118.80" x2="155.14" y2="105.50" stroke="#ff3040" stroke-width="1.4" stroke-opacity="0.18"/>
<line x1="261.62" y1="78.90" x2="261.62" y2="105.50" stroke="#ff1010" stroke-width="1.4" stroke-opacity="0.45" style="mix-blend-mode:multiply"/>
<line x1="261.62" y1="78.90" x2="261.62" y2="105.50" stroke="#ff3040" stroke-width="1.4" stroke-opacity="0.18"/>
<line x1="288.24" y1="118.80" x2="261.62" y2="105.50" stroke="#ff1010" stroke-width="1.4" stroke-opacity="0.45" style="mix-blend-mode:multiply"/>
<line x1="288.24" y1="118.80" x2="261.62" y2="105.50" stroke="#ff3040" stroke-width="1.4" stroke-opacity="0.18"/>
<line x1="181.76" y1="118.80" x2="181.76" y2="145.40" stroke="#ff1010" stroke-width="1.4" stroke-opacity="0.45" style="mix-blend-mode:multiply"/>
<line x1="181.76" y1="118.80" x2="181.76" y2="145.40" stroke="#ff3040" stroke-width="1.4" stroke-opacity="0.18"/>
<line x1="235.00" y1="145.40" x2="208.38" y2="158.70" stroke="#ff1010" stroke-width="1.4" stroke-opacity="0.45" style="mix-blend-mode:multiply"/>
<line x1="235.00" y1="145.40" x2="208.38" y2="158.70" stroke="#ff3040" stroke-width="1.4" stroke-opacity="0.18"/>
<line x1="208.38" y1="158.70" x2="181.76" y2="145.40" stroke="#ff1010" stroke-width="1.4" stroke-opacity="0.45" style="mix-blend-mode:multiply"/>
<line x1="208.38" y1="158.70" x2="181.76" y2="145.40" stroke="#ff3040" stroke-width="1.4" stroke-opacity="0.18"/>
<line x1="288.24" y1="145.40" x2="261.62" y2="158.70" stroke="#ff1010" stroke-width="1.4" stroke-opacity="0.45" style="mix-blend-mode:multiply"/>
<line x1="288.24" y1="145.40" x2="261.62" y2="158.70" stroke="#ff3040" stroke-width="1.4" stroke-opacity="0.18"/>
<line x1="261.62" y1="158.70" x2="235.00" y2="145.40" stroke="#ff1010" stroke-width="1.4" stroke-opacity="0.45" style="mix-blend-mode:multiply"/>
<line x1="261.62" y1="158.70" x2="235.00" y2="145.40" stroke="#ff3040" stroke-width="1.4" stroke-opacity="0.18"/>
<line x1="208.38" y1="158.70" x2="208.38" y2="185.30" stroke="#ff1010" stroke-width="1.4" stroke-opacity="0.45" style="mix-blend-mode:multiply"/>
<line x1="208.38" y1="158.70" x2="208.38" y2="185.30" stroke="#ff3040" stroke-width="1.4" stroke-opacity="0.18"/>
<line x1="208.38" y1="185.30" x2="181.76" y2="198.60" stroke="#ff1010" stroke-width="1.4" stroke-opacity="0.45" style="mix-blend-mode:multiply"/>
<line x1="208.38" y1="185.30" x2="181.76" y2="198.60" stroke="#ff3040" stroke-width="1.4" stroke-opacity="0.18"/>
<line x1="181.76" y1="198.60" x2="181.76" y2="225.20" stroke="#ff1010" stroke-width="1.4" stroke-opacity="0.45" style="mix-blend-mode:multiply"/>
<line x1="181.76" y1="198.60" x2="181.76" y2="225.20" stroke="#ff3040" stroke-width="1.4" stroke-opacity="0.18"/>
<line x1="181.76" y1="225.20" x2="155.14" y2="238.50" stroke="#ff1010" stroke-width="1.4" stroke-opacity="0.45" style="mix-blend-mode:multiply"/>
<line x1="181.76" y1="225.20" x2="155.14" y2="238.50" stroke="#ff3040" stroke-width="1.4" stroke-opacity="0.18"/>
<line x1="288.24" y1="225.20" x2="261.62" y2="238.50" stroke="#ff1010" stroke-width="1.4" stroke-opacity="0.45" style="mix-blend-mode:multiply"/>
<line x1="288.24" y1="225.20" x2="261.62" y2="238.50" stroke="#ff3040" stroke-width="1.4" stroke-opacity="0.18"/>
<line x1="155.14" y1="238.50" x2="155.14" y2="265.10" stroke="#ff1010" stroke-width="1.4" stroke-opacity="0.45" style="mix-blend-mode:multiply"/>
<line x1="155.14" y1="238.50" x2="155.14" y2="265.10" stroke="#ff3040" stroke-width="1.4" stroke-opacity="0.18"/>
<line x1="261.62" y1="238.50" x2="261.62" y2="265.10" stroke="#ff1010" stroke-width="1.4" stroke-opacity="0.45" style="mix-blend-mode:multiply"/>
<line x1="261.62" y1="238.50" x2="261.62" y2="265.10" stroke="#ff3040" stroke-width="1.4" stroke-opacity="0.18"/>
<circle cx="101.90" cy="52.30" r="2.6" fill="#e81c26"/>
<circle cx="155.14" cy="52.30" r="2.6" fill="#e81c26"/>
<circle cx="208.38" cy="52.30" r="2.6" fill="#e81c26"/>
<circle cx="261.62" cy="52.30" r="2.6" fill="#e81c26"/>
<circle cx="128.52" cy="92.20" r="2.6" fill="#e81c26"/>
<circle cx="181.76" cy="92.20" r="2.6" fill="#e81c26"/>
<circle cx="235.00" cy="92.20" r="2.6" fill="#e81c26"/>
<circle cx="288.24" cy="92.20" r="2.6" fill="#e81c26"/>
<circle cx="101.90" cy="132.10" r="2.6" fill="#e81c26"/>
<circle cx="155.14" cy="132.10" r="2.6" fill="#e81c26"/>
<circle cx="208.38" cy="132.10" r="2.6" fill="#e81c26"/>
<circle cx="261.62" cy="132.10" r="2.6" fill="#e81c26"/>
<circle cx="128.52" cy="172.00" r="2.6" fill="#e81c26"/>
<circle cx="181.76" cy="172.00" r="2.6" fill="#e81c26"/>
<circle cx="235.00" cy="172.00" r="2.6" fill="#e81c26"/>
<circle cx="288.24" cy="172.00" r="2.6" fill="#e81c26"/>
<circle cx="101.90" cy="211.90" r="2.6" fill="#e81c26"/>
<circle cx="155.14" cy="211.90" r="2.6" fill="#e81c26"/>
<circle cx="208.38" cy="211.90" r="2.6" fill="#e81c26"/>
<circle cx="261.62" cy="211.90" r="2.6" fill="#e81c26"/>
<circle cx="128.52" cy="251.80" r="2.6" fill="#e81c26"/>
<circle cx="181.76" cy="251.80" r="2.6" fill="#e81c26"/>
<circle cx="235.00" cy="251.80" r="2.6" fill="#e81c26"/>
<circle cx="288.24" cy="251.80" r="2.6" fill="#e81c26"/>
</g></svg>
<div class="a" style="left:306.3px;top:38.8px;width:121.5px;height:233.6px;background:#eff4fc"></div>
<div class="a" style="left:306.3px;top:38.8px;width:1.6px;height:233.6px;background:#e0e8ee"></div>
<!-- scrollbar -->
<div class="a" style="left:427.8px;top:38.8px;width:11.2px;height:233.6px;background:#f0f3f6;border-left:1px solid #c8d4da;border-right:1px solid #d8e0e4"></div>
<div class="a" style="left:428.8px;top:48.5px;width:9.2px;height:208px;border-radius:4.5px;background:linear-gradient(90deg,#4aa4d4 0%,#7cc4ea 40%,#8cd0f0 55%,#56acd8 100%);border:1px solid #5a9cc0"></div>
<svg class="a" style="left:428px;top:40px" width="11" height="8"><path d="M3 5.2 L5.5 2.6 L8 5.2" stroke="#202428" stroke-width="1.3" fill="none"/></svg>
<svg class="a" style="left:428px;top:261px" width="11" height="9"><path d="M3 3.4 L5.5 6 L8 3.4" stroke="#202428" stroke-width="1.3" fill="none"/></svg>
<div class="a" style="left:439.4px;top:38.8px;width:1px;height:236.8px;background:#b4c6d0"></div>
<div class="a" style="left:440.4px;top:38.8px;width:67.6px;height:236.8px;background:#eaf1f7"></div>
<div class="field" style="left:447.5px;top:56.4px;width:38.6px;height:9.2px"></div>
<div class="a" style="left:486px;top:56.4px;width:7.9px;height:9.2px;background:#484c50;border:1px solid #303438"></div>
<svg class="a" style="left:486px;top:56.4px" width="8" height="9.2"><path d="M2.2 3.6 L4 1.6 L5.8 3.6 M2.2 5.6 L4 7.6 L5.8 5.6" stroke="#d8dcdf" stroke-width="1.1" fill="none"/></svg>
<div class="pill" style="left:447.3px;top:69.5px;width:47.9px;height:10.5px"></div>
<div class="a" style="left:448.2px;top:97.2px;width:7.7px;height:7.2px;background:linear-gradient(#5aa0b4,#88c4d4);border:1px solid #3c7888"></div>
<div class="a" style="left:448.2px;top:104.4px;width:7.7px;height:1.8px;background:linear-gradient(#c0e0e8,#eef6f9)"></div>
<svg class="a" style="left:448.2px;top:96.5px" width="9" height="9"><path d="M1.6 4.4 L3.6 6.8 L7.4 1.4" stroke="#0c1c28" stroke-width="1.4" fill="none"/></svg>
<div class="field" style="left:447.5px;top:131.8px;width:38.6px;height:9.5px"></div>
<div class="a" style="left:486px;top:131.8px;width:7.9px;height:9.5px;background:#484c50;border:1px solid #303438"></div>
<svg class="a" style="left:486px;top:131.8px" width="8" height="9.5"><path d="M2.2 3.8 L4 1.7 L5.8 3.8 M2.2 5.8 L4 7.9 L5.8 5.8" stroke="#d8dcdf" stroke-width="1.1" fill="none"/></svg>
<div class="pill" style="left:447.1px;top:256px;width:45.5px;height:10.2px"></div>
<div class="a" style="left:86.6px;top:272.4px;width:421.6px;height:3.6px;background:linear-gradient(#e6eef2,#c4d4da)"></div>
<div class="a" style="left:86px;top:276.6px;width:422px;height:13px;background:#ecf1f6"></div>
<svg class="a" style="left:274px;top:274.5px" width="46" height="4"><path d="M1 2 H45" stroke="#b8c4cc" stroke-width="0.9" stroke-dasharray="1.2 1.8"/></svg>

<!-- table pane -->
<div class="a" style="left:86.6px;top:289.6px;width:420.4px;height:68px;border:1px solid #a8bcc6;background:#eef3fa"></div>
<div class="tab tabsel" style="left:87.5px;top:280.3px;width:104.1px;height:9.6px"></div>
<div class="a" style="left:87.7px;top:290.8px;width:291.69px;height:8.2px;background:linear-gradient(#e4e8ec 0%,#eef0f2 25%,#dfe3e6 60%,#c4cace 100%)"></div>
<div class="a" style="left:87.7px;top:299.0px;width:291.69px;height:11.34px;background:#14ec14"></div>
<div class="a" style="left:87.7px;top:310.14px;width:291.69px;height:11.14px;background:#fafcfc"></div>
<div class="a" style="left:87.7px;top:321.28px;width:291.69px;height:11.14px;background:#fafcfc"></div>
<div class="a" style="left:87.7px;top:332.42px;width:291.69px;height:11.14px;background:#fafcfc"></div>
<div class="a" style="left:87.7px;top:343.56px;width:291.69px;height:11.14px;background:#fafcfc"></div>
<div class="a" style="left:87.7px;top:309.64px;width:291.69px;height:1px;background:#b4cccc"></div>
<div class="a" style="left:87.7px;top:320.78px;width:291.69px;height:1px;background:#b4cccc"></div>
<div class="a" style="left:87.7px;top:331.92px;width:291.69px;height:1px;background:#b4cccc"></div>
<div class="a" style="left:87.7px;top:343.06px;width:291.69px;height:1px;background:#b4cccc"></div>
<div class="a" style="left:87.7px;top:354.20px;width:291.69px;height:1px;background:#b4cccc"></div>
<div class="a" style="left:128.87px;top:290.8px;width:1px;height:63.90px;background:#a8c4c4"></div>
<div class="a" style="left:170.54px;top:290.8px;width:1px;height:63.90px;background:#a8c4c4"></div>
<div class="a" style="left:212.21px;top:290.8px;width:1px;height:63.90px;background:#a8c4c4"></div>
<div class="a" style="left:253.88px;top:290.8px;width:1px;height:63.90px;background:#a8c4c4"></div>
<div class="a" style="left:295.55px;top:290.8px;width:1px;height:63.90px;background:#a8c4c4"></div>
<div class="a" style="left:336.72px;top:299.0px;width:2px;height:55.70px;background:#202020"></div>
<div class="a" style="left:337.22px;top:290.8px;width:1px;height:8.2px;background:#f8f8f8"></div>
<div class="a" style="left:378.89px;top:290.8px;width:1px;height:63.90px;background:#a8c4c4"></div>
<div class="a" style="left:87.7px;top:354.20px;width:291.69px;height:1px;background:#a8c4c4"></div>
<svg class="a" style="left:288px;top:360px" width="64" height="4"><path d="M1 2 H63" stroke="#b8c4cc" stroke-width="0.9" stroke-dasharray="1.2 1.8"/></svg>

<!-- right pane -->
<div class="a" style="left:509.8px;top:36.3px;width:127.4px;height:321px;border:1px solid #a8bcc6;background:#eef3fa"></div>
<div class="tab tabsel" style="left:511.3px;top:27.3px;width:97.1px;height:9.3px"></div>
<div class="a" style="left:510.4px;top:35.8px;width:126.2px;height:2.2px;background:linear-gradient(#d4e0e2,#9cb2b6)"></div>
<div class="a" style="left:511.6px;top:55.2px;width:125px;height:284.1px;border:1px solid #b8c8d2;border-right:none;background:#ebf1f7"></div>
<div class="a" style="left:636.6px;top:37px;width:1.6px;height:320px;background:#b2d0e4"></div>
<div class="field" style="left:517.4px;top:70.4px;width:83.6px;height:10.9px"></div>
<div class="field" style="left:517.4px;top:98.5px;width:83.6px;height:10.3px"></div>
<div class="a" style="left:517.5px;top:126.6px;width:83.8px;height:10px;background:#f6f9fb;border:1px solid #dde6ec"></div>
<div class="a" style="left:517.5px;top:153px;width:83.8px;height:11.8px;background:linear-gradient(#fbfcfc,#e8ecef);border:1px solid #98a8b2"></div>
<div class="a" style="left:591.2px;top:154.6px;width:9.7px;height:8.6px;background:linear-gradient(#d0d8dc,#9ca8ae);border:1px solid #4a5458"></div>
<svg class="a" style="left:591.2px;top:154.6px" width="10" height="9"><path d="M2.6 3 L4.85 5.4 L7.1 3" stroke="#101418" stroke-width="1.3" fill="none"/></svg>
<div class="a" style="left:517.5px;top:181.2px;width:83.8px;height:11.9px;background:linear-gradient(#fbfcfc,#e8ecef);border:1px solid #98a8b2"></div>
<div class="a" style="left:591.2px;top:182.8px;width:9.7px;height:8.6px;background:linear-gradient(#d0d8dc,#9ca8ae);border:1px solid #4a5458"></div>
<svg class="a" style="left:591.2px;top:182.8px" width="10" height="9"><path d="M2.6 3 L4.85 5.4 L7.1 3" stroke="#101418" stroke-width="1.3" fill="none"/></svg>
<div class="tbtn" style="left:511px;top:343px;width:14.8px;height:12px"></div>
<svg class="a" style="left:511px;top:343px" width="15" height="12"><path d="M4.6 2.6 L10.8 6 L4.6 9.4Z" fill="#30c030" stroke="#149014" stroke-width="0.6"/></svg>
<div class="tbtn" style="left:529px;top:343px;width:14.3px;height:12px"></div>
<svg class="a" style="left:529px;top:343px" width="15" height="12"><path d="M5.4 2.6 L11 6 L5.4 9.4Z" fill="#30c030" stroke="#149014" stroke-width="0.6"/><rect x="3.4" y="2.8" width="1.6" height="6.4" fill="#149014"/></svg>
<div class="tbtn" style="left:617px;top:343px;width:14px;height:12px"></div>
<div class="a" style="left:620.8px;top:345.8px;width:6.4px;height:6.6px;background:#d41c1c;border:0.5px solid #901010"></div>

<!-- output -->
<div class="a" style="left:0px;top:358.2px;width:640px;height:1px;background:#d6dee4"></div>
<div class="a" style="left:0px;top:359.2px;width:640px;height:1px;background:#f8fafc"></div>
<div class="a" style="left:0px;top:371px;width:640px;height:0.8px;background:#d6e0e6"></div>
<div class="a" style="left:0px;top:377.6px;width:640px;height:6px;background:linear-gradient(#f4fbfc,#daf0f2)"></div>
<div class="a" style="left:3.6px;top:383.5px;width:632px;height:55.5px;border:2px solid #b4d8dc;background:#fff"></div>
<div class="a" style="left:3.6px;top:383.5px;width:632px;height:1px;background:#6ab0c8"></div>
<div class="tab tabun" style="left:4.1px;top:374.2px;width:95.6px;height:9.6px"></div>
<div class="tab tabsel" style="left:99.8px;top:373.6px;width:98.2px;height:10.2px"></div>
<div class="a" style="left:624px;top:385.3px;width:9.8px;height:51.2px;background:#eef0f2;border:1px solid #8c969c"></div>
<div class="a" style="left:625px;top:404.6px;width:7.8px;height:19.6px;border-radius:3.5px;background:linear-gradient(90deg,#c4cacf,#f0f2f4 50%,#c0c6ca);border:1px solid #7c868c"></div>
<svg class="a" style="left:624px;top:386.5px" width="10" height="7"><path d="M3 4.6 L4.9 2.6 L6.8 4.6" stroke="#202428" stroke-width="1.1" fill="none"/></svg>
<svg class="a" style="left:624px;top:428.5px" width="10" height="7"><path d="M3 2.6 L4.9 4.6 L6.8 2.6" stroke="#202428" stroke-width="1.1" fill="none"/></svg>
<div class="a" style="left:0px;top:443.8px;width:640px;height:1px;background:#d0d8de"></div>
<div class="a" style="left:0px;top:444.8px;width:640px;height:1px;background:#fbfcfd"></div>
<div class="a" style="left:0px;top:445.8px;width:640px;height:15.2px;background:#e8eff5"></div>
<div class="a" style="left:637px;top:445.8px;width:1px;height:15.2px;background:#c8d0d6"></div>
<div class="a" style="left:1px;top:446px;width:1px;height:15px;background:#ccd6de"></div>
<svg class="a" style="left:0;top:0" width="640" height="461">
<path d="M178.80 29.90 L182.80 33.90 M182.80 29.90 L178.80 33.90" stroke="#0a2848" stroke-width="1.05"/><path d="M190.40 376.60 L194.60 380.80 M194.60 376.60 L190.40 380.80" stroke="#0a2848" stroke-width="1.05"/><path d="M184.50 283.30 L188.50 287.30 M188.50 283.30 L184.50 287.30" stroke="#0a2848" stroke-width="1.05"/><path d="M602.40 29.90 L606.20 33.70 M606.20 29.90 L602.40 33.70" stroke="#0a2848" stroke-width="1.05"/>
<text x="12.60" y="9.30" font-size="7.0" font-weight="normal" fill="#ffffff" stroke="#ffffff" stroke-width="0.12" textLength="217.10" lengthAdjust="spacingAndGlyphs">ISNS - Interactive Neural Network Simulator - Tutorial_Kohonen</text>
<text x="2.90" y="21.10" font-size="6.761904761904762" font-weight="normal" fill="#0a0a0a" textLength="9.00" lengthAdjust="spacingAndGlyphs">File</text>
<text x="18.90" y="21.10" font-size="6.761904761904762" font-weight="normal" fill="#0a0a0a" textLength="13.00" lengthAdjust="spacingAndGlyphs">Data</text>
<text x="38.30" y="21.10" font-size="6.761904761904762" font-weight="normal" fill="#0a0a0a" textLength="22.90" lengthAdjust="spacingAndGlyphs">Network</text>
<text x="67.80" y="21.10" font-size="6.761904761904762" font-weight="normal" fill="#0a0a0a" textLength="25.30" lengthAdjust="spacingAndGlyphs">Algorithm</text>
<text x="99.70" y="21.10" font-size="6.761904761904762" font-weight="normal" fill="#0a0a0a" textLength="32.50" lengthAdjust="spacingAndGlyphs">Visualization</text>
<text x="138.80" y="21.10" font-size="6.761904761904762" font-weight="normal" fill="#0a0a0a" textLength="12.20" lengthAdjust="spacingAndGlyphs">Help</text>
<text x="4.90" y="31.30" font-size="6.4" font-weight="bold" fill="#0a0a0a" textLength="14.80" lengthAdjust="spacingAndGlyphs">Data</text>
<text x="5.00" y="43.40" font-size="7.212698412698413" font-weight="normal" fill="#083c54" stroke="#083c54" stroke-width="0.12" textLength="12.60" lengthAdjust="spacingAndGlyphs">data</text>
<text x="4.90" y="143.20" font-size="6.4" font-weight="bold" fill="#0a0a0a" textLength="28.90" lengthAdjust="spacingAndGlyphs">Networks</text>
<text x="13.90" y="156.00" font-size="6.987301587301587" font-weight="normal" fill="#0a0a0a" textLength="52.30" lengthAdjust="spacingAndGlyphs">Kohonenova_mapa</text>
<text x="4.90" y="256.00" font-size="6.4" font-weight="bold" fill="#0a0a0a" textLength="33.80" lengthAdjust="spacingAndGlyphs">Algorithms</text>
<text x="4.90" y="367.90" font-size="6.4" font-weight="bold" fill="#0a0a0a" textLength="21.10" lengthAdjust="spacingAndGlyphs">Output</text>
<text x="14.60" y="380.90" font-size="6.987301587301587" font-weight="normal" fill="#0a0a0a" textLength="73.70" lengthAdjust="spacingAndGlyphs">Kohonenova_mapa learning</text>
<text x="108.80" y="380.80" font-size="6.987301587301587" font-weight="normal" fill="#0a2848" stroke="#0a2848" stroke-width="0.1" textLength="78.70" lengthAdjust="spacingAndGlyphs">Kohonenova_mapa clustering</text>
<text x="9.80" y="394.60" font-size="7.0436507936507935" font-weight="normal" fill="#0a0a0a" textLength="35.20" lengthAdjust="spacingAndGlyphs">Cluster #1: 0</text>
<text x="9.80" y="402.30" font-size="7.0436507936507935" font-weight="normal" fill="#0a0a0a" textLength="78.40" lengthAdjust="spacingAndGlyphs">Cluster #2: 2, 11, 6, 1, 10, 5</text>
<text x="9.80" y="410.00" font-size="7.0436507936507935" font-weight="normal" fill="#0a0a0a" textLength="41.80" lengthAdjust="spacingAndGlyphs">Cluster #3: 3, 7</text>
<text x="9.80" y="417.70" font-size="7.0436507936507935" font-weight="normal" fill="#0a0a0a" textLength="102.80" lengthAdjust="spacingAndGlyphs">Cluster #4: 17, 13, 4, 9, 8, 16, 20, 12</text>
<text x="9.80" y="425.40" font-size="7.0436507936507935" font-weight="normal" fill="#0a0a0a" textLength="91.50" lengthAdjust="spacingAndGlyphs">Cluster #5: 15, 19, 21, 18, 14, 22</text>
<text x="9.80" y="433.10" font-size="7.0436507936507935" font-weight="normal" fill="#0a0a0a" textLength="38.60" lengthAdjust="spacingAndGlyphs">Cluster #6: 23</text>
<text x="97.20" y="34.20" font-size="6.987301587301587" font-weight="normal" fill="#0a2848" stroke="#0a2848" stroke-width="0.1" textLength="78.50" lengthAdjust="spacingAndGlyphs">Kohonenova_mapa clustering</text>
<text x="196.00" y="34.20" font-size="6.987301587301587" font-weight="normal" fill="#0a0a0a" textLength="50.60" lengthAdjust="spacingAndGlyphs">Kohonenova_mapa</text>
<text x="446.80" y="51.20" font-size="7.1" font-weight="normal" fill="#0a0a0a" textLength="40.10" lengthAdjust="spacingAndGlyphs">Clusters count:</text>
<text x="481.20" y="62.60" font-size="6.987301587301587" font-weight="normal" fill="#0a0a0a" textLength="2.80" lengthAdjust="spacingAndGlyphs">6</text>
<text x="452.70" y="77.10" font-size="6.987301587301587" font-weight="normal" fill="#0a0a0a" stroke="#0a0a0a" stroke-width="0.12" textLength="36.30" lengthAdjust="spacingAndGlyphs">Optimal count</text>
<text x="457.70" y="103.00" font-size="7.1" font-weight="normal" fill="#0a0a0a" textLength="40.60" lengthAdjust="spacingAndGlyphs">Show distances</text>
<text x="447.00" y="127.20" font-size="7.1" font-weight="normal" fill="#0a0a0a" textLength="35.80" lengthAdjust="spacingAndGlyphs">Hexagon size:</text>
<text x="478.00" y="139.40" font-size="6.987301587301587" font-weight="normal" fill="#0a0a0a" textLength="6.00" lengthAdjust="spacingAndGlyphs">12</text>
<text x="452.70" y="263.60" font-size="6.987301587301587" font-weight="normal" fill="#0a0a0a" stroke="#0a0a0a" stroke-width="0.12" textLength="34.60" lengthAdjust="spacingAndGlyphs">Do clustering</text>
<text x="97.00" y="287.40" font-size="6.761904761904762" font-weight="normal" fill="#0a2848" stroke="#0a2848" stroke-width="0.1" textLength="85.00" lengthAdjust="spacingAndGlyphs">Kohonenova_mapa learning set</text>
<text x="520.80" y="34.00" font-size="6.761904761904762" font-weight="normal" fill="#0a2848" stroke="#0a2848" stroke-width="0.1" textLength="80.20" lengthAdjust="spacingAndGlyphs">Kohonenova_mapa algorithm</text>
<text x="517.30" y="51.40" font-size="7.1" font-weight="normal" fill="#0a0a0a" textLength="91.10" lengthAdjust="spacingAndGlyphs">isns.kohonen.MyKohonenLearning</text>
<text x="517.90" y="67.40" font-size="6.987301587301587" font-weight="normal" fill="#0a0a0a" textLength="28.10" lengthAdjust="spacingAndGlyphs">numSteps</text>
<text x="519.40" y="78.80" font-size="6.987301587301587" font-weight="normal" fill="#0a0a0a" textLength="13.10" lengthAdjust="spacingAndGlyphs">1000</text>
<text x="517.90" y="95.50" font-size="6.987301587301587" font-weight="normal" fill="#0a0a0a" textLength="28.20" lengthAdjust="spacingAndGlyphs">macroStep</text>
<text x="519.40" y="106.10" font-size="6.987301587301587" font-weight="normal" fill="#0a0a0a" textLength="6.60" lengthAdjust="spacingAndGlyphs">10</text>
<text x="518.00" y="122.60" font-size="6.987301587301587" font-weight="normal" fill="#0a0a0a" textLength="51.90" lengthAdjust="spacingAndGlyphs">curStep (read-only)</text>
<text x="519.30" y="133.50" font-size="6.987301587301587" font-weight="normal" fill="#b0b8c0" textLength="12.40" lengthAdjust="spacingAndGlyphs">1000</text>
<text x="518.00" y="150.30" font-size="6.987301587301587" font-weight="normal" fill="#0a0a0a" textLength="25.30" lengthAdjust="spacingAndGlyphs">stepMode</text>
<text x="520.20" y="161.50" font-size="6.761904761904762" font-weight="normal" fill="#0a0a0a" textLength="21.80" lengthAdjust="spacingAndGlyphs">NORMAL</text>
<text x="518.00" y="178.00" font-size="6.987301587301587" font-weight="normal" fill="#0a0a0a" textLength="17.70" lengthAdjust="spacingAndGlyphs">priority</text>
<text x="520.20" y="188.60" font-size="6.761904761904762" font-weight="normal" fill="#0a0a0a" textLength="41.00" lengthAdjust="spacingAndGlyphs">MAX_PRIORITY</text>
<text x="106.92" y="297.70" font-size="6.761904761904762" font-weight="normal" fill="#0a0a0a" textLength="3.22" lengthAdjust="spacingAndGlyphs">0</text>
<text x="148.59" y="297.70" font-size="6.761904761904762" font-weight="normal" fill="#0a0a0a" textLength="3.22" lengthAdjust="spacingAndGlyphs">1</text>
<text x="190.26" y="297.70" font-size="6.761904761904762" font-weight="normal" fill="#0a0a0a" textLength="3.22" lengthAdjust="spacingAndGlyphs">2</text>
<text x="231.93" y="297.70" font-size="6.761904761904762" font-weight="normal" fill="#0a0a0a" textLength="3.22" lengthAdjust="spacingAndGlyphs">3</text>
<text x="273.60" y="297.70" font-size="6.761904761904762" font-weight="normal" fill="#0a0a0a" textLength="3.22" lengthAdjust="spacingAndGlyphs">4</text>
<text x="315.27" y="297.70" font-size="6.761904761904762" font-weight="normal" fill="#0a0a0a" textLength="3.22" lengthAdjust="spacingAndGlyphs">5</text>
<text x="350.01" y="297.70" font-size="6.761904761904762" font-weight="normal" fill="#0a0a0a" textLength="17.08" lengthAdjust="spacingAndGlyphs">winner</text>
<text x="88.60" y="307.30" font-size="6.987301587301587" font-weight="normal" fill="#005000" textLength="8.62" lengthAdjust="spacingAndGlyphs">1.0</text>
<text x="130.27" y="307.30" font-size="6.987301587301587" font-weight="normal" fill="#005000" textLength="8.62" lengthAdjust="spacingAndGlyphs">1.0</text>
<text x="171.94" y="307.30" font-size="6.987301587301587" font-weight="normal" fill="#005000" textLength="8.62" lengthAdjust="spacingAndGlyphs">1.0</text>
<text x="213.61" y="307.30" font-size="6.987301587301587" font-weight="normal" fill="#005000" textLength="8.62" lengthAdjust="spacingAndGlyphs">1.0</text>
<text x="255.28" y="307.30" font-size="6.987301587301587" font-weight="normal" fill="#005000" textLength="8.62" lengthAdjust="spacingAndGlyphs">1.0</text>
<text x="296.95" y="307.30" font-size="6.987301587301587" font-weight="normal" fill="#005000" textLength="8.62" lengthAdjust="spacingAndGlyphs">1.0</text>
<text x="338.62" y="307.30" font-size="6.987301587301587" font-weight="normal" fill="#005000" textLength="3.45" lengthAdjust="spacingAndGlyphs">0</text>
<text x="88.60" y="318.44" font-size="6.987301587301587" font-weight="normal" fill="#0a0a0a" textLength="8.62" lengthAdjust="spacingAndGlyphs">1.0</text>
<text x="130.27" y="318.44" font-size="6.987301587301587" font-weight="normal" fill="#0a0a0a" textLength="8.62" lengthAdjust="spacingAndGlyphs">0.0</text>
<text x="171.94" y="318.44" font-size="6.987301587301587" font-weight="normal" fill="#0a0a0a" textLength="8.62" lengthAdjust="spacingAndGlyphs">1.0</text>
<text x="213.61" y="318.44" font-size="6.987301587301587" font-weight="normal" fill="#0a0a0a" textLength="8.62" lengthAdjust="spacingAndGlyphs">0.0</text>
<text x="255.28" y="318.44" font-size="6.987301587301587" font-weight="normal" fill="#0a0a0a" textLength="8.62" lengthAdjust="spacingAndGlyphs">1.0</text>
<text x="296.95" y="318.44" font-size="6.987301587301587" font-weight="normal" fill="#0a0a0a" textLength="8.62" lengthAdjust="spacingAndGlyphs">0.0</text>
<text x="338.62" y="318.44" font-size="6.987301587301587" font-weight="normal" fill="#0a0a0a" textLength="3.45" lengthAdjust="spacingAndGlyphs">0</text>
<text x="88.60" y="329.58" font-size="6.987301587301587" font-weight="normal" fill="#0a0a0a" textLength="8.62" lengthAdjust="spacingAndGlyphs">0.0</text>
<text x="130.27" y="329.58" font-size="6.987301587301587" font-weight="normal" fill="#0a0a0a" textLength="8.62" lengthAdjust="spacingAndGlyphs">0.0</text>
<text x="171.94" y="329.58" font-size="6.987301587301587" font-weight="normal" fill="#0a0a0a" textLength="8.62" lengthAdjust="spacingAndGlyphs">1.0</text>
<text x="213.61" y="329.58" font-size="6.987301587301587" font-weight="normal" fill="#0a0a0a" textLength="8.62" lengthAdjust="spacingAndGlyphs">0.0</text>
<text x="255.28" y="329.58" font-size="6.987301587301587" font-weight="normal" fill="#0a0a0a" textLength="8.62" lengthAdjust="spacingAndGlyphs">0.0</text>
<text x="296.95" y="329.58" font-size="6.987301587301587" font-weight="normal" fill="#0a0a0a" textLength="8.62" lengthAdjust="spacingAndGlyphs">0.0</text>
<text x="338.62" y="329.58" font-size="6.987301587301587" font-weight="normal" fill="#0a0a0a" textLength="6.89" lengthAdjust="spacingAndGlyphs">13</text>
<text x="88.60" y="340.72" font-size="6.987301587301587" font-weight="normal" fill="#0a0a0a" textLength="10.68" lengthAdjust="spacingAndGlyphs">-1.0</text>
<text x="130.27" y="340.72" font-size="6.987301587301587" font-weight="normal" fill="#0a0a0a" textLength="10.68" lengthAdjust="spacingAndGlyphs">-1.0</text>
<text x="171.94" y="340.72" font-size="6.987301587301587" font-weight="normal" fill="#0a0a0a" textLength="10.68" lengthAdjust="spacingAndGlyphs">-1.0</text>
<text x="213.61" y="340.72" font-size="6.987301587301587" font-weight="normal" fill="#0a0a0a" textLength="8.62" lengthAdjust="spacingAndGlyphs">0.0</text>
<text x="255.28" y="340.72" font-size="6.987301587301587" font-weight="normal" fill="#0a0a0a" textLength="8.62" lengthAdjust="spacingAndGlyphs">0.0</text>
<text x="296.95" y="340.72" font-size="6.987301587301587" font-weight="normal" fill="#0a0a0a" textLength="10.68" lengthAdjust="spacingAndGlyphs">-1.0</text>
<text x="338.62" y="340.72" font-size="6.987301587301587" font-weight="normal" fill="#0a0a0a" textLength="6.89" lengthAdjust="spacingAndGlyphs">23</text>
<text x="88.60" y="351.86" font-size="6.987301587301587" font-weight="normal" fill="#0a0a0a" textLength="10.68" lengthAdjust="spacingAndGlyphs">-1.0</text>
<text x="130.27" y="351.86" font-size="6.987301587301587" font-weight="normal" fill="#0a0a0a" textLength="10.68" lengthAdjust="spacingAndGlyphs">-1.0</text>
<text x="171.94" y="351.86" font-size="6.987301587301587" font-weight="normal" fill="#0a0a0a" textLength="10.68" lengthAdjust="spacingAndGlyphs">-1.0</text>
<text x="213.61" y="351.86" font-size="6.987301587301587" font-weight="normal" fill="#0a0a0a" textLength="10.68" lengthAdjust="spacingAndGlyphs">-1.0</text>
<text x="255.28" y="351.86" font-size="6.987301587301587" font-weight="normal" fill="#0a0a0a" textLength="10.68" lengthAdjust="spacingAndGlyphs">-1.0</text>
<text x="296.95" y="351.86" font-size="6.987301587301587" font-weight="normal" fill="#0a0a0a" textLength="10.68" lengthAdjust="spacingAndGlyphs">-1.0</text>
<text x="338.62" y="351.86" font-size="6.987301587301587" font-weight="normal" fill="#0a0a0a" textLength="6.89" lengthAdjust="spacingAndGlyphs">23</text>
</svg>
</body></html>
